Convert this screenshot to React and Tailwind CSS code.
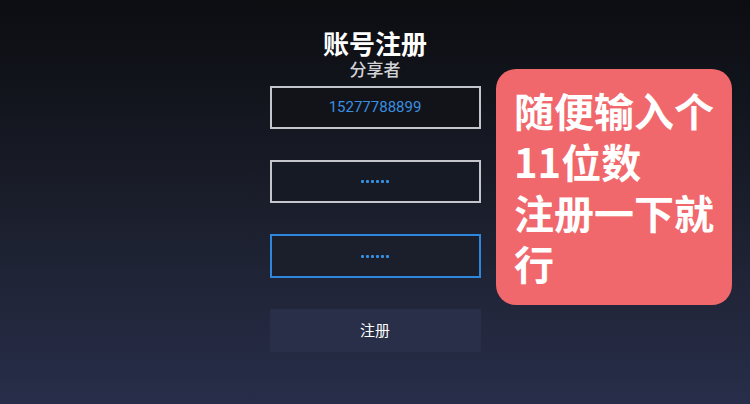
function Dots() {
  return (
    <div className="flex gap-[2px]">
      {[0, 1, 2, 3, 4, 5].map((i) => (
        <span key={i} className="h-[3px] w-[3px] rounded-[1px] bg-[#3490e2]" />
      ))}
    </div>
  );
}

export default function App() {
  const font = { fontFamily: '"Noto Sans CJK SC", "Noto Sans", sans-serif' };
  return (
    <div
      className="relative w-[750px] h-[404px] overflow-hidden bg-gradient-to-b from-[#0c0d11] via-[#1a1e2b] to-[#282e4a]"
      style={font}
    >
      <div className="flex flex-col items-center pt-[28px]">
        <h1 className="text-[26px] leading-[30px] font-bold text-white">账号注册</h1>
        <p className="text-[17px] leading-[22px] font-medium text-[#d2d3d6]">分享者</p>

        <div className="mt-[6px] flex w-[211px] flex-col gap-[31px]">
          <div className="flex h-[43px] items-center justify-center border-2 border-[#c4c6cc] bg-[#111319]">
            <span className="text-[15px] text-[#3a8fe0]" style={{ fontFamily: "Roboto, sans-serif" }}>
              15277788899
            </span>
          </div>
          <div className="flex h-[43px] items-center justify-center border-2 border-[#c4c6cc] bg-[#161a24]">
            <Dots />
          </div>
          <div className="flex h-[44px] items-center justify-center border-2 border-[#2f86dd] bg-[#1b1f2c]">
            <Dots />
          </div>
          <button className="flex h-[43px] items-center justify-center bg-[#292f48] text-[15px] text-white">
            注册
          </button>
        </div>
      </div>

      <div className="absolute left-[496px] top-[69px] h-[236px] w-[236px] rounded-[20px] bg-[#f0686c] px-[18px] pt-[16px]">
        <div className="w-[200px] text-[40px] leading-[51px] font-bold text-white">
          <div>随便输入个</div>
          <div>11位数</div>
          <div>注册一下就行</div>
        </div>
      </div>
    </div>
  );
}
